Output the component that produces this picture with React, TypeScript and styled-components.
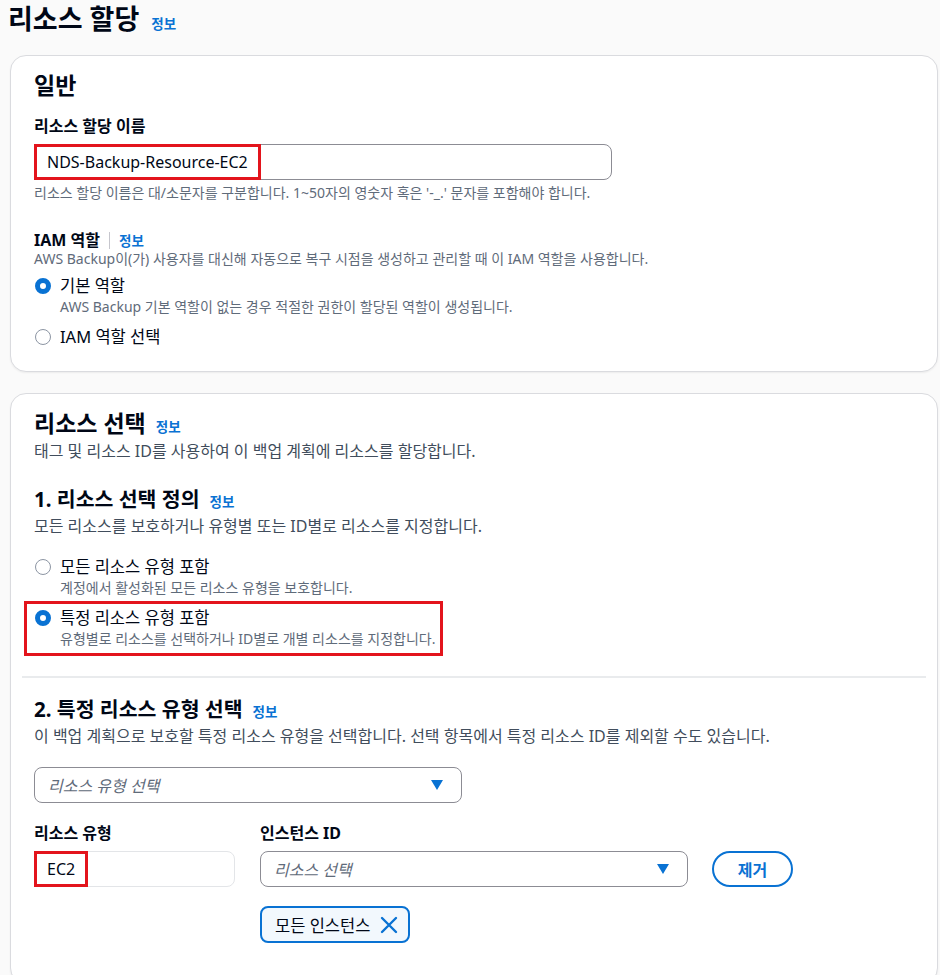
import React from "react";
import styled, { createGlobalStyle } from "styled-components";

/* ------------------------------------------------------------------ */
/* global                                                             */
/* ------------------------------------------------------------------ */
const GlobalStyle = createGlobalStyle`
  html, body {
    margin: 0;
    padding: 0;
    background: #fafafa;
  }
  body {
    font-family: "Noto Sans", "Noto Sans CJK KR", sans-serif;
    color: #000716;
  }
  * { box-sizing: border-box; }
`;

const BLUE = "#0972d3";
const MARK = "#e3141c";

/* ------------------------------------------------------------------ */
/* small drawings                                                     */
/* ------------------------------------------------------------------ */
function Caret() {
  return (
    <svg width="12" height="10" viewBox="0 0 12 10">
      <polygon points="0,0 12,0 6,10" fill={BLUE} />
    </svg>
  );
}

function DismissIcon() {
  return (
    <svg width="18" height="18" viewBox="0 0 18 18">
      <path
        d="M2 2 L16 16 M16 2 L2 16"
        stroke={BLUE}
        strokeWidth="2.4"
        strokeLinecap="round"
        fill="none"
      />
    </svg>
  );
}

/* ------------------------------------------------------------------ */
/* page                                                               */
/* ------------------------------------------------------------------ */
export default function App() {
  return (
    <>
      <GlobalStyle />
      <Page>
        <Header>
          <PageTitle>리소스 할당</PageTitle>
          <InfoLink>정보</InfoLink>
        </Header>

        {/* 일반 */}
        <Card $bottom={23}>
          <CardTitle>일반</CardTitle>

          <Field $top={16}>
            <FieldLabel>리소스 할당 이름</FieldLabel>
            <TextBox $width={578}>
              <MarkedValue>NDS-Backup-Resource-EC2</MarkedValue>
            </TextBox>
            <Hint $top={4}>
              리소스 할당 이름은 대/소문자를 구분합니다. 1~50자의 영숫자 혹은
              '-_.' 문자를 포함해야 합니다.
            </Hint>
          </Field>

          <Field $top={28}>
            <LabelRow>
              <FieldLabel $lh={20}>IAM 역할</FieldLabel>
              <Separator />
              <InfoLink>정보</InfoLink>
            </LabelRow>
            <Hint>
              AWS Backup이(가) 사용자를 대신해 자동으로 복구 시점을 생성하고
              관리할 때 이 IAM 역할을 사용합니다.
            </Hint>
            <RadioGroup $top={7}>
              <RadioOption>
                <RadioCircle $checked />
                <RadioText>
                  <RadioLabel>기본 역할</RadioLabel>
                  <RadioDesc>
                    AWS Backup 기본 역할이 없는 경우 적절한 권한이 할당된
                    역할이 생성됩니다.
                  </RadioDesc>
                </RadioText>
              </RadioOption>
              <RadioOption>
                <RadioCircle />
                <RadioText>
                  <RadioLabel>IAM 역할 선택</RadioLabel>
                </RadioText>
              </RadioOption>
            </RadioGroup>
          </Field>
        </Card>

        {/* 리소스 선택 */}
        <Card $bottom={40}>
          <TitleRow>
            <CardTitle>리소스 선택</CardTitle>
            <InfoLink>정보</InfoLink>
          </TitleRow>
          <SectionDesc>
            태그 및 리소스 ID를 사용하여 이 백업 계획에 리소스를 할당합니다.
          </SectionDesc>

          <TitleRow $top={24}>
            <SectionTitle>1. 리소스 선택 정의</SectionTitle>
            <InfoLink>정보</InfoLink>
          </TitleRow>
          <SectionDesc>
            모든 리소스를 보호하거나 유형별 또는 ID별로 리소스를 지정합니다.
          </SectionDesc>

          <RadioGroup $top={19}>
            <RadioOption>
              <RadioCircle />
              <RadioText>
                <RadioLabel>모든 리소스 유형 포함</RadioLabel>
                <RadioDesc>
                  계정에서 활성화된 모든 리소스 유형을 보호합니다.
                </RadioDesc>
              </RadioText>
            </RadioOption>
            <RadioOption $marked>
              <RadioCircle $checked />
              <RadioText>
                <RadioLabel>특정 리소스 유형 포함</RadioLabel>
                <RadioDesc>
                  유형별로 리소스를 선택하거나 ID별로 개별 리소스를 지정합니다.
                </RadioDesc>
              </RadioText>
            </RadioOption>
          </RadioGroup>

          <Divider />

          <TitleRow $top={18}>
            <SectionTitle>2. 특정 리소스 유형 선택</SectionTitle>
            <InfoLink>정보</InfoLink>
          </TitleRow>
          <SectionDesc>
            이 백업 계획으로 보호할 특정 리소스 유형을 선택합니다. 선택
            항목에서 특정 리소스 ID를 제외할 수도 있습니다.
          </SectionDesc>

          <Select $width={428} $top={20}>
            <Placeholder>리소스 유형 선택</Placeholder>
            <Caret />
          </Select>

          <AssignRow>
            <Column>
              <FieldLabel>리소스 유형</FieldLabel>
              <TextBox $width={201} $readOnly>
                <MarkedValue>EC2</MarkedValue>
              </TextBox>
            </Column>
            <Column>
              <FieldLabel>인스턴스 ID</FieldLabel>
              <ControlRow>
                <Select $width={428}>
                  <Placeholder>리소스 선택</Placeholder>
                  <Caret />
                </Select>
                <RemoveButton>제거</RemoveButton>
              </ControlRow>
              <Token>
                <TokenText>모든 인스턴스</TokenText>
                <DismissIcon />
              </Token>
            </Column>
          </AssignRow>
        </Card>
      </Page>
    </>
  );
}

/* ------------------------------------------------------------------ */
/* styles                                                             */
/* ------------------------------------------------------------------ */
const Page = styled.div`
  padding: 4px 2px 0 8px;
  min-height: 975px;
`;

const Header = styled.div`
  display: flex;
  align-items: baseline;
  gap: 12px;
`;

const PageTitle = styled.h1`
  margin: 0;
  font-size: 27px;
  line-height: 30px;
  font-weight: 700;
`;

const InfoLink = styled.span`
  font-size: 13.5px;
  font-weight: 700;
  color: ${BLUE};
`;

const Card = styled.section<{ $bottom?: number }>`
  margin: 21px 0 0 2px;
  background: #fff;
  border: 1px solid #dadbdf;
  border-radius: 16px;
  box-shadow: 0 1px 2px rgba(0, 7, 22, 0.06);
  padding: 15px 23px ${(p) => p.$bottom ?? 25}px;
  display: flex;
  flex-direction: column;
`;

const TitleRow = styled.div<{ $top?: number }>`
  display: flex;
  align-items: baseline;
  gap: 10px;
  margin-top: ${(p) => p.$top ?? 0}px;
`;

const CardTitle = styled.h2`
  margin: 0;
  font-size: 23px;
  line-height: 28px;
  font-weight: 700;
`;

const SectionTitle = styled.h3`
  margin: 0;
  font-size: 20.5px;
  line-height: 26px;
  font-weight: 700;
`;

const SectionDesc = styled.p`
  margin: 3px 0 0;
  font-size: 16px;
  line-height: 22px;
  color: #414d5c;
`;

const Field = styled.div<{ $top?: number }>`
  display: flex;
  flex-direction: column;
  align-items: flex-start;
  margin-top: ${(p) => p.$top ?? 0}px;
`;

const LabelRow = styled.div`
  display: flex;
  align-items: center;
  gap: 9px;
`;

const Separator = styled.span`
  width: 1px;
  height: 17px;
  background: #c6c6cd;
`;

const FieldLabel = styled.label<{ $lh?: number }>`
  font-size: 16px;
  line-height: ${(p) => p.$lh ?? 22}px;
  font-weight: 700;
`;

const TextBox = styled.div<{ $width: number; $readOnly?: boolean }>`
  width: ${(p) => p.$width}px;
  height: 36px;
  margin-top: 7px;
  display: flex;
  align-items: stretch;
  background: #fff;
  border: 1px solid ${(p) => (p.$readOnly ? "#e3e5e8" : "#8c8c94")};
  border-radius: 8px;
`;

const MarkedValue = styled.span`
  display: flex;
  align-items: center;
  margin: -1px 0 -1px -1px;
  padding: 0 10px;
  border: 3px solid ${MARK};
  font-size: 16px;
  color: #000716;
`;

const Hint = styled.p<{ $top?: number }>`
  margin: ${(p) => p.$top ?? 0}px 0 0;
  font-size: 14px;
  line-height: 18px;
  color: #5f6b7a;
`;

const RadioGroup = styled.div<{ $top?: number }>`
  display: flex;
  flex-direction: column;
  align-items: flex-start;
  gap: 9px;
  margin-top: ${(p) => p.$top ?? 0}px;
`;

const RadioOption = styled.div<{ $marked?: boolean }>`
  display: flex;
  align-items: flex-start;
  gap: 9px;
  ${(p) =>
    p.$marked &&
    `
    padding: 3px 5px 4px 7px;
    margin: -3px -5px -4px -7px;
    outline: 3px solid ${MARK};
  `}
`;

const RadioCircle = styled.span<{ $checked?: boolean }>`
  flex: none;
  width: 16px;
  height: 16px;
  margin: 3px 0 0 1px;
  border-radius: 50%;
  background: #fff;
  border: ${(p) => (p.$checked ? `5px solid ${BLUE}` : "1.5px solid #8c95a3")};
`;

const RadioText = styled.div`
  display: flex;
  flex-direction: column;
`;

const RadioLabel = styled.span`
  font-size: 16.5px;
  line-height: 22px;
`;

const RadioDesc = styled.span`
  font-size: 14px;
  line-height: 20px;
  color: #5f6b7a;
`;

const Divider = styled.hr`
  margin: 27px -12px 0;
  border: none;
  height: 2px;
  background: #e9ebed;
`;

const Select = styled.div<{ $width: number; $top?: number }>`
  width: ${(p) => p.$width}px;
  height: 36px;
  margin-top: ${(p) => p.$top ?? 0}px;
  display: flex;
  align-items: center;
  justify-content: space-between;
  padding: 0 18px 0 13px;
  background: #fff;
  border: 1px solid #8c8c94;
  border-radius: 8px;
`;

const Placeholder = styled.span`
  font-size: 16px;
  font-style: italic;
  color: #5f6b7a;
`;

const AssignRow = styled.div`
  display: flex;
  align-items: flex-start;
  gap: 25px;
  margin-top: 19px;
`;

const Column = styled.div`
  display: flex;
  flex-direction: column;
  align-items: flex-start;
`;

const ControlRow = styled.div`
  display: flex;
  align-items: center;
  gap: 24px;
  margin-top: 7px;
`;

const RemoveButton = styled.button`
  width: 81px;
  height: 36px;
  border: 2px solid ${BLUE};
  border-radius: 20px;
  background: #fff;
  color: ${BLUE};
  font-family: inherit;
  font-size: 16px;
  font-weight: 700;
  cursor: pointer;
`;

const Token = styled.div`
  margin-top: 19px;
  height: 37px;
  display: flex;
  align-items: center;
  gap: 10px;
  padding: 0 10px 0 13px;
  background: #f2f8fd;
  border: 2px solid ${BLUE};
  border-radius: 8px;
`;

const TokenText = styled.span`
  font-size: 16.5px;
  color: #000716;
`;
